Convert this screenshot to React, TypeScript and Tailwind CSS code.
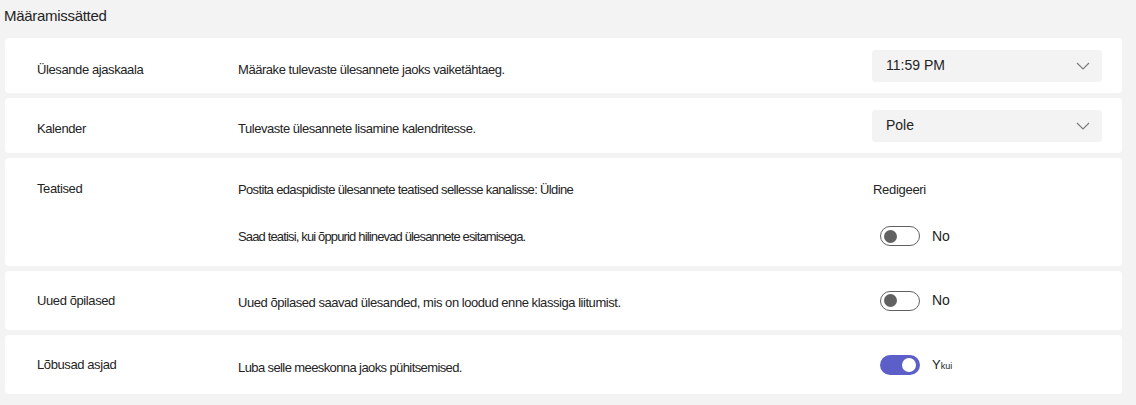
import React from 'react';

const font = { fontFamily: '"Liberation Sans", Arial, sans-serif' };

function Chevron() {
  return (
    <svg width="14" height="8" viewBox="0 0 14 8" fill="none">
      <path d="M1 1l6 6 6-6" stroke="#7a7a7a" strokeWidth="1.1" />
    </svg>
  );
}

function Select({ value }: { value: string }) {
  return (
    <div className="flex items-center justify-between w-[230px] h-[32px] rounded bg-[#f3f3f3] pl-[14px] pr-[12px]">
      <span className="text-[14px] text-[#242424]">{value}</span>
      <Chevron />
    </div>
  );
}

function Toggle({ on, label }: { on?: boolean; label: React.ReactNode }) {
  return (
    <div className="flex items-center gap-3 pl-2">
      {on ? (
        <div className="flex items-center justify-end w-[40px] h-[20px] rounded-full bg-[#5b5fc7] px-[4px]">
          <div className="w-[14px] h-[14px] rounded-full bg-white" />
        </div>
      ) : (
        <div className="flex items-center w-[40px] h-[20px] rounded-full border border-[#616161] px-[3px]">
          <div className="w-[13px] h-[13px] rounded-full bg-[#616161]" />
        </div>
      )}
      <span className="text-[14px] text-[#242424]">{label}</span>
    </div>
  );
}

function Row({
  label,
  desc,
  control,
  labelClass = '',
  descClass = '',
}: {
  label: string;
  desc: string;
  control: React.ReactNode;
  labelClass?: string;
  descClass?: string;
}) {
  return (
    <div className="flex items-center">
      <div className={`w-[201px] shrink-0 text-[13px] tracking-[-0.4px] ${labelClass}`}>{label}</div>
      <div className={`flex-1 text-[13px] ${descClass}`}>{desc}</div>
      <div className="w-[230px] shrink-0">{control}</div>
    </div>
  );
}

export default function App() {
  return (
    <div className="w-[1136px] h-[405px] bg-[#f3f3f3] text-[#242424] pl-[5px] pr-[14px]" style={font}>
      <div className="h-[38px] pt-[5px] -ml-[1px] text-[15px] tracking-[-0.3px]">Määramissätted</div>
      <div className="flex flex-col gap-[5px]">
        <div className="rounded bg-white pl-8 pr-5 h-[55px] flex flex-col justify-center">
          <Row
            label="Ülesande ajaskaala"
            desc="Määrake tulevaste ülesannete jaoks vaiketähtaeg."
            labelClass="pt-[9px]"
            descClass="pt-[8px] tracking-[-0.45px]"
            control={<Select value="11:59 PM" />}
          />
        </div>
        <div className="rounded bg-white pl-8 pr-5 h-[55px] flex flex-col justify-center">
          <Row
            label="Kalender"
            desc="Tulevaste ülesannete lisamine kalendritesse."
            labelClass="pt-[7px]"
            descClass="pt-[6px] tracking-[-0.47px]"
            control={<Select value="Pole" />}
          />
        </div>
        <div className="rounded bg-white pl-8 pr-5 h-[108px] pt-[20px] flex flex-col gap-[25px]">
          <div className="flex items-center h-[22px]">
            <div className="w-[201px] shrink-0 text-[13px] tracking-[-0.4px]">Teatised</div>
            <div className="flex-1 text-[13px] tracking-[-0.65px] pt-[2px]">
              Postita edaspidiste ülesannete teatised sellesse kanalisse: Üldine
            </div>
            <div className="w-[230px] shrink-0 text-[13px] tracking-[-0.3px] pl-[1px] pt-[2px]">Redigeeri</div>
          </div>
          <div className="flex items-center h-[22px]">
            <div className="w-[201px] shrink-0" />
            <div className="flex-1 text-[13px] tracking-[-0.85px] pt-[2px]">
              Saad teatisi, kui õppurid hilinevad ülesannete esitamisega.
            </div>
            <div className="w-[230px] shrink-0">
              <Toggle label="No" />
            </div>
          </div>
        </div>
        <div className="rounded bg-white pl-8 pr-5 h-[59px] flex flex-col justify-center">
          <Row
            label="Uued õpilased"
            desc="Uued õpilased saavad ülesanded, mis on loodud enne klassiga liitumist."
            descClass="pt-[5px] tracking-[-0.45px]"
            control={<Toggle label="No" />}
          />
        </div>
        <div className="rounded bg-white pl-8 pr-5 h-[59px] flex flex-col justify-center">
          <Row
            label="Lõbusad asjad"
            desc="Luba selle meeskonna jaoks pühitsemised."
            descClass="pt-[6px] tracking-[-0.6px]"
            control={
              <Toggle
                on
                label={
                  <span className="text-[13px]">
                    Y<span className="text-[9px]">kui</span>
                  </span>
                }
              />
            }
          />
        </div>
      </div>
    </div>
  );
}
